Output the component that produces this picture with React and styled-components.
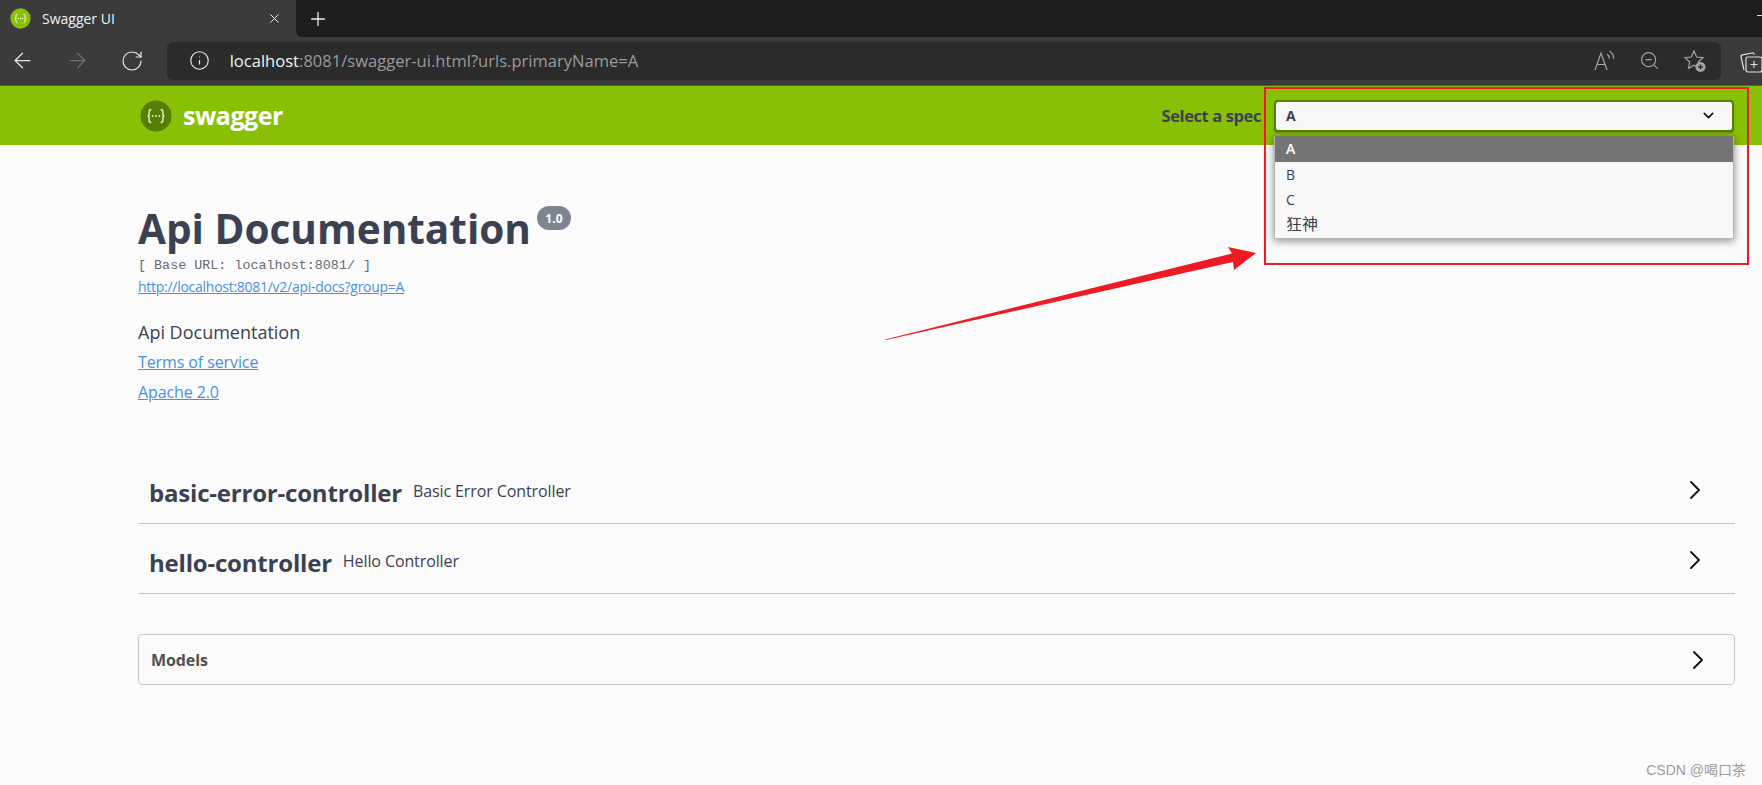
import React from "react";
import styled, { createGlobalStyle } from "styled-components";
import { ArrowLeft, ArrowRight, RotateCw, Info, ZoomOut, Plus, X, ChevronDown, ChevronRight } from "lucide-react";

const Global = createGlobalStyle`
  html, body { margin: 0; padding: 0; background: #fbfbfb; overflow: hidden; }
  #root { width: 1762px; height: 785px; position: relative; overflow: hidden; }
  * { box-sizing: border-box; }
`;

const Shell = styled.div`
  display: flex; flex-direction: column; height: 785px; background: #fbfbfb;
  font-family: "Open Sans", "Noto Sans CJK SC", sans-serif; color: #3b4151;
`;
const TabStrip = styled.div`display: flex; align-items: stretch; height: 37px; background: #3b3b3b;`;
const Tab = styled.div`
  width: 296px; display: flex; align-items: center; padding: 0 14px 0 10px; gap: 11px;
  color: #f0f0f0; font-size: 14px; background: #3b3b3b;
`;
const TabTitle = styled.span`flex: 1; white-space: nowrap;`;
const StripRest = styled.div`
  flex: 1; display: flex; align-items: center; background: #1e1e1e; border-bottom-left-radius: 6px;
  padding-left: 11px; color: #eee; position: relative;
`;
const WindowDash = styled.span`position: absolute; right: 0; top: 15px; width: 5px; height: 1px; background: #ddd;`;
const Toolbar = styled.div`
  height: 49px; display: flex; align-items: center; background: #3b3b3b; padding: 0 0 1px 10px;
  border-bottom: 1px solid #55585a;
`;
const NavBtn = styled.div`
  width: 55px; display: flex; align-items: center; color: ${p => p.$dim ? "#6f6f6f" : "#e4e4e4"};
`;
const UrlBar = styled.div`
  width: 1558px; height: 38px; margin-left: -8px; background: #2b2b2b; border-radius: 6px; display: flex; align-items: center;
  padding: 0 0 0 22px; color: #9a9a9a; font-size: 16.5px;
`;
const Host = styled.span`color: #f2f2f2;`;
const UrlText = styled.span`margin-left: 20px; flex: 1; white-space: nowrap; letter-spacing: .03px;`;
const UrlIcons = styled.div`display: flex; align-items: center; gap: 23px; padding-right: 14px; color: #a4a4a4;`;
const EndIcon = styled.div`margin-left: 17px; color: #ddd; display: flex;`;

const Topbar = styled.header`
  height: 59px; background: #89bf04; display: flex; align-items: center; padding: 0 28px 0 140px;
`;
const Brand = styled.div`display: flex; align-items: center; gap: 11px; color: #fff; font-weight: 700; font-size: 25px; letter-spacing: -.5px;`;
const BrandName = styled.span`position: relative; top: -1px;`;
const SpecLabel = styled.span`
  margin-left: auto; font-size: 16.5px; font-weight: 700; color: #3b4151; margin-right: 13px; letter-spacing: -.4px;
`;
const SpecSelect = styled.div`
  width: 460px; height: 32px; background: #f7f7f7; border: 2px solid #547f00; border-radius: 4px;
  display: flex; align-items: center; justify-content: space-between; padding: 0 15px 0 10px;
  font-size: 14px; font-weight: 700; color: #3b4151; box-shadow: 0 1px 2px rgba(0,0,0,.25);
`;

const Main = styled.main`flex: 1; padding: 0 27px 0 138px; display: flex; flex-direction: column; position: relative;`;
const TitleRow = styled.div`display: flex; align-items: flex-start; margin-top: 55px; height: 58px;`;
const Title = styled.h1`margin: 0; font-size: 40.5px; line-height: 58px; font-weight: 700; color: #3b4151; white-space: nowrap;`;
const Version = styled.span`
  margin: 6px 0 0 6px; width: 34px; height: 24px; border-radius: 12px; background: #7d8492; color: #fff;
  font-size: 12px; font-weight: 700; display: flex; align-items: center; justify-content: center;
`;
const BaseUrl = styled.div`font-family: "Liberation Mono", monospace; font-size: 13.4px; line-height: 17px; color: #666a73; margin-top: -1px;`;
const BlueLink = styled.a`color: #4990e2; text-decoration: underline; display: block; white-space: nowrap;`;
const SpecLink = styled(BlueLink)`font-size: 14px; line-height: 19px; margin-top: 3px; letter-spacing: -.27px;`;
const Description = styled.div`font-size: 18px; line-height: 21px; color: #3b4151; margin-top: 26px;`;
const InfoLink = styled(BlueLink)`font-size: 16px; line-height: 22px; margin-top: 8px; letter-spacing: -.1px;`;

const Tags = styled.div`margin-top: 51px; display: flex; flex-direction: column;`;
const TagRow = styled.div`
  height: 70px; display: flex; align-items: center; padding: 2px 24px 0 11px; border-bottom: 1px solid #c4c4c4;
`;
const TagName = styled.span`font-size: 24px; font-weight: 700; letter-spacing: -.2px; color: #3b4151; position: relative; top: 3px;`;
const TagDesc = styled.span`font-size: 16px; margin-left: 11px; color: #3b4151; flex: 1; position: relative; top: 1px; letter-spacing: -.1px;`;
const Arrowhead = styled.div`display: flex; color: #111;`;

const Models = styled.section`
  margin-top: 40px; height: 51px; border: 1px solid #c4c4c4; border-radius: 4px; display: flex; align-items: center;
  justify-content: space-between; padding: 0 20px 0 12px;
`;
const ModelsLabel = styled.span`font-size: 16px; font-weight: 700; color: #505050; letter-spacing: -.1px;`;

const Watermark = styled.div`
  position: absolute; right: 16px; bottom: 6px; font-size: 14px; color: #9b9b9b;
  font-family: "Liberation Sans", "Noto Sans CJK SC", sans-serif; white-space: nowrap;
`;
const Dropdown = styled.div`
  position: absolute; left: 1274px; top: 136px; width: 460px; background: #f8f8f8; border: 1px solid #b5b5b5; border-top: 0;
  box-shadow: 0 2px 8px rgba(0,0,0,.45); font-size: 14px; color: #3b4151;
  font-family: "Open Sans", "Noto Sans CJK SC", sans-serif;
`;
const Option = styled.div`
  height: ${p => p.$h || 25}px; display: flex; align-items: center; padding: 0 0 ${p => p.$cjk ? 4 : 1}px 11px;
  background: ${p => p.$active ? "#757575" : "transparent"};
  color: ${p => p.$active ? "#fff" : "#3b4151"};
  font-size: ${p => p.$cjk ? 16 : 14}px;
  font-weight: ${p => p.$active ? 600 : 400};
`;
const RedBox = styled.div`position: absolute; left: 1264px; top: 87px; width: 485px; height: 178px; border: 2px solid #ed1c24; pointer-events: none;`;
const RedArrow = styled.svg`position: absolute; left: 880px; top: 240px;`;

const SwaggerMark = ({ size, bg, fg }) => (
  <svg width={size} height={size} viewBox="0 0 32 32">
    <circle cx="16" cy="16" r="15.5" fill={bg} />
    <path d="M11.5 9.5c-2 0-2.4 1-2.4 2.6v2c0 1.3-.6 1.900-1.700 1.900 1.100 0 1.700.6 1.700 1.900v2c0 1.600.4 2.600 2.400 2.600M20.500 9.500c2 0 2.400 1 2.400 2.600v2c0 1.300.6 1.900 1.700 1.900-1.100 0-1.700.6-1.700 1.900v2c0 1.600-.4 2.600-2.400 2.600" fill="none" stroke={fg} strokeWidth="1.5" />
    <circle cx="12.6" cy="16" r="1" fill={fg} /><circle cx="16" cy="16" r="1" fill={fg} /><circle cx="19.4" cy="16" r="1" fill={fg} />
  </svg>
);

const ReadAloud = () => (
  <svg width="24" height="24" viewBox="0 0 24 24" fill="none" stroke="currentColor" strokeWidth="1.2">
    <path d="M3 21 9 4l6 17M5 15.5h8" />
    <path d="M15 5c1.500 1 2.300 2.500 2.300 4.500M17.500 2c2.700 1.800 4.300 4.500 4.300 8" />
  </svg>
);
const FavAdd = () => (
  <svg width="24" height="24" viewBox="0 0 24 24" fill="none">
    <path d="m11 2 2.700 6 6.300.7-4.700 4.300 1.200 6.300L11 16.200 5.500 19.300 6.700 13 2 8.700 8.300 8z" stroke="currentColor" strokeWidth="1.2" />
    <circle cx="17.500" cy="18" r="5" fill="#a4a4a4" />
    <path d="M17.500 15.500v5M15 18h5" stroke="#2b2b2b" strokeWidth="1.3" />
  </svg>
);
const Collections = () => (
  <svg width="24" height="26" viewBox="0 0 24 26" fill="none" stroke="currentColor" strokeWidth="1.2">
    <path d="M6 22 3 9c-.3-1 .3-2 1.300-2.200L14 5c1-.2 2 .4 2.300 1.500" />
    <rect x="8" y="9" width="16" height="15" rx="2" />
    <path d="M16 13v7M12.500 16.500h7" />
  </svg>
);

export default function App() {
  return (
    <Shell>
      <Global />
      <TabStrip>
        <Tab>
          <SwaggerMark size={21} bg="#89bf04" fg="#fff" />
          <TabTitle>Swagger UI</TabTitle>
          <X size={15} strokeWidth={1.6} />
        </Tab>
        <StripRest>
          <Plus size={22} strokeWidth={1.4} />
          <WindowDash />
        </StripRest>
      </TabStrip>
      <Toolbar>
        <NavBtn><ArrowLeft size={25} strokeWidth={1.2} /></NavBtn>
        <NavBtn $dim><ArrowRight size={25} strokeWidth={1.2} /></NavBtn>
        <NavBtn><RotateCw size={24} strokeWidth={1.2} /></NavBtn>
        <UrlBar>
          <Info size={21} strokeWidth={1.3} color="#eee" />
          <UrlText><Host>localhost</Host>:8081/swagger-ui.html?urls.primaryName=A</UrlText>
          <UrlIcons>
            <ReadAloud />
            <ZoomOut size={21} strokeWidth={1.3} />
            <FavAdd />
          </UrlIcons>
        </UrlBar>
        <EndIcon><Collections /></EndIcon>
      </Toolbar>
      <Topbar>
        <Brand>
          <SwaggerMark size={32} bg="#547f00" fg="#dfe9c5" />
          <BrandName>swagger</BrandName>
        </Brand>
        <SpecLabel>Select a spec</SpecLabel>
        <SpecSelect>
          A
          <ChevronDown size={17} strokeWidth={2.2} color="#111" />
        </SpecSelect>
      </Topbar>
      <Main>
        <TitleRow>
          <Title>Api Documentation</Title>
          <Version>1.0</Version>
        </TitleRow>
        <BaseUrl>[ Base URL: localhost:8081/ ]</BaseUrl>
        <SpecLink href="#">http://localhost:8081/v2/api-docs?group=A</SpecLink>
        <Description>Api Documentation</Description>
        <InfoLink href="#">Terms of service</InfoLink>
        <InfoLink href="#">Apache 2.0</InfoLink>
        <Tags>
          <TagRow>
            <TagName>basic-error-controller</TagName>
            <TagDesc>Basic Error Controller</TagDesc>
            <Arrowhead><ChevronRight size={32} strokeWidth={1.4} /></Arrowhead>
          </TagRow>
          <TagRow>
            <TagName>hello-controller</TagName>
            <TagDesc>Hello Controller</TagDesc>
            <Arrowhead><ChevronRight size={32} strokeWidth={1.4} /></Arrowhead>
          </TagRow>
        </Tags>
        <Models>
          <ModelsLabel>Models</ModelsLabel>
          <Arrowhead><ChevronRight size={32} strokeWidth={1.4} /></Arrowhead>
        </Models>
      </Main>
      <Dropdown>
        <Option $active $h={26}>A</Option>
        <Option>B</Option>
        <Option>C</Option>
        <Option $h={26} $cjk>狂神</Option>
      </Dropdown>
      <RedBox />
      <RedArrow width="380" height="105" viewBox="0 0 380 105">
        <polygon points="5,99.500 6,100 353,22 354,30 376,13 348,7 352,13.500" fill="#ed1c24" />
      </RedArrow>
      <Watermark>CSDN @喝口茶</Watermark>
    </Shell>
  );
}
